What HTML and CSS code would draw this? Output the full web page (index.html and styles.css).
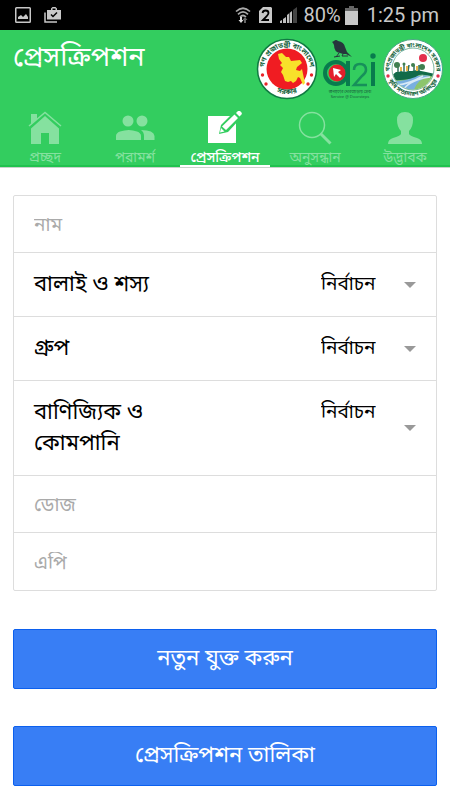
FILE: index.html
```html
<!DOCTYPE html>
<html lang="bn">
<head>
<meta charset="utf-8">
<meta name="viewport" content="width=device-width, initial-scale=1">
<title>প্রেসক্রিপশন</title>
<link rel="stylesheet" href="styles.css">
</head>
<body>
<div class="status">
  <div class="status-group status-left">
    <svg width="16" height="16" viewBox="0 0 16 16"><path fill="#c8c8c8" fill-rule="evenodd" d="M1.500 0h13A1.500 1.500 0 0 1 16 1.500v13a1.500 1.500 0 0 1-1.500 1.500h-13A1.500 1.500 0 0 1 0 14.500v-13A1.500 1.500 0 0 1 1.500 0zM1.500 1.500v13h13v-13z"/><path fill="#c8c8c8" d="M3 12V10l3-2 2 2 3-3 2 3v2z"/></svg>
    <svg width="17" height="16" viewBox="0 0 17 16"><path fill="none" stroke="#c8c8c8" stroke-width="1.500" d="M1 5.500V15h12"/><path fill="#c8c8c8" fill-rule="evenodd" d="M3 3h4V1.500L8.500 0h3L13 1.500V3h4v9.500H3zM8.500 3h3V1.500h-3z"/><path fill="none" stroke="#000" stroke-width="1.500" d="M7 7.500l2 2 4-4"/></svg>
  </div>
  <div class="status-group">
    <svg class="wifi" width="16" height="18" viewBox="0 0 16 18"><g fill="none" stroke="#aaa" stroke-width="1.700"><path d="M1 5.500Q8-1 15 5.500"/><path d="M3 8.300Q8 3.500 13 8.300"/><path d="M5 11Q8 8 11 11"/></g><path fill="#ddd" d="M5 11h2v3h1.500L6 17l-2.500-3H5z"/><path fill="#666" d="M9 17v-3H7.500L10 11l2.500 3H11v3z"/></svg>
    <svg class="sim" width="13" height="16" viewBox="0 0 13 16"><path fill="#c8c8c8" d="M4 0h8l1 1v15H0V4z"/><path fill="none" stroke="#000" stroke-width="1.800" d="M3.500 6Q4 3.500 6.500 3.500 9.500 3.500 9.500 6q0 1.700-5.500 7h6"/></svg>
    <svg class="signal" width="17" height="16" viewBox="0 0 17 16"><path fill="#c0c0c0" d="M0 14l2-1v3H0zM3 12l3-2v6H3zM7 8l5-4v12H7z"/><path fill="#000" d="M9.300 6h.6v10h-.6z"/><path fill="#444" d="M13 3l4-3v16h-4z"/></svg>
    <span class="status-text">80%</span>
    <svg class="battery" width="13" height="19" viewBox="0 0 13 19"><path fill="#666" d="M4 0h5v2h4v4H0V2h4z"/><path fill="#c8c8c8" d="M0 5h13v14H0z"/></svg>
    <span class="status-text">1:25 pm</span>
  </div>
</div>

<header class="header">
  <div class="title-row">
    <h1 class="title">প্রেসক্রিপশন</h1>
    <div class="logos">
      <svg width="62" height="62" viewBox="0 0 62 62" role="img" aria-label="গণপ্রজাতন্ত্রী বাংলাদেশ সরকার">
        <defs><path id="g-top" d="M11 43.500A23 23 0 1 1 51 43.500"/><path id="g-bot" d="M13 49A26.500 26.500 0 0 0 49 49"/></defs>
        <circle cx="31" cy="31" r="29.500" fill="#fff" stroke="#107a42" stroke-width="1.500"/>
        <circle cx="31" cy="31" r="20.500" fill="#f01c22"/>
        <path fill="#f8e02a" d="M22 16l4-1 4 4 3 0 2 4 9-1 2 3-5 4-1 3 4 1 2-2 1 5 2 9-2 2-3-7-2-1-2 4-3 2-2-2-3 1-3-1-2-6-2-3 2-4-3-3 2-2-3-4z"/>
        <g fill="#e8242a"><circle cx="6.500" cy="37" r="1.700"/><circle cx="10" cy="46" r="1.700"/><circle cx="55.500" cy="37" r="1.700"/><circle cx="52" cy="46" r="1.700"/></g>
        <g class="seal-text"><text><textPath href="#g-top" startOffset="50%">গণ প্রজাতন্ত্রী বাংলাদেশ</textPath></text><text><textPath href="#g-bot" startOffset="50%">সরকার</textPath></text></g>
      </svg>
      <svg width="56" height="64" viewBox="0 0 56 64" role="img" aria-label="a2i">
        <path fill="#26363c" d="M10 4l2-1q2-2 4 0 6 1 7 6l2 5 5 5-6-3-3 0-3-1q-6-1-6-8l-1-2z"/>
        <path fill="none" stroke="#26363c" stroke-width="1" d="M17 15l-3 4M21 16l-1 2 6 0M12 19l6-1"/>
        <circle cx="14" cy="35" r="11" fill="none" stroke="#087b4d" stroke-width="4"/>
        <circle cx="15" cy="35" r="8.500" fill="#e31f2b"/>
        <path fill="none" stroke="#087b4d" stroke-width="4" d="M26 23v25"/>
        <path fill="#fff" d="M11 30l8 2-3 2 4 4-2 2-4-4-2 3z"/>
        <path fill="none" stroke="#17905a" stroke-width="2.500" d="M32 32q0-6 6-6t6 6q0 3-4 6l-8 9h13"/>
        <path fill="none" stroke="#087b4d" stroke-width="4" d="M51 24v24"/>
        <circle cx="51" cy="18" r="2.700" fill="#087b4d"/>
        <text class="logo-caption" x="28" y="55">জনগণের দোরগোড়ায় সেবা</text>
        <text class="logo-caption" x="28" y="60">Service @ Doorsteps</text>
      </svg>
      <svg width="62" height="62" viewBox="0 0 62 62" role="img" aria-label="কৃষি সম্প্রসারণ অধিদপ্তর">
        <defs><path id="k-top" d="M9 41A23.500 23.500 0 1 1 53 41"/><path id="k-bot" d="M7.500 44A27 27 0 0 0 54.500 44"/><clipPath id="k-clip"><circle cx="31" cy="31" r="20.500"/></clipPath></defs>
        <circle cx="31" cy="31" r="29.500" fill="#fff" stroke="#4aa783" stroke-width="1"/>
        <circle cx="31" cy="31" r="21" fill="#fff" stroke="#7fb8a0" stroke-width="1"/>
        <g clip-path="url(#k-clip)">
          <circle cx="41" cy="20" r="4" fill="#e3304c"/>
          <path fill="#8cc56c" d="M10 40q12-4 26-3l18-1v22H22z"/>
          <path fill="#79afe0" d="M12 43q15 0 20-5l18-1q-16 4-19 18H16z"/>
          <path fill="none" stroke="#d8e9f7" stroke-width="1.500" d="M15 47q12-1 26-9M22 51q6-9 26-12"/>
          <path fill="#126a49" d="M9 38l5-4 3 0 2-1 3 1 5-1 3 0 5-1 4 1 5 1 9 2v3q-10-3-16-2-8 6-27 5z"/>
          <path fill="none" stroke="#326e58" stroke-width="1.500" d="M16 27v7M22 25v9M27 27l-1 7M32 27v6M37 27v6"/>
          <path fill="#e8b64c" d="M24 28h2v5h-2zM34 28h2v5h-2zM18 29h2v4h-2z"/>
          <g fill="#3f7f50"><circle cx="15" cy="27" r="3"/><circle cx="22" cy="26" r="1.500"/><circle cx="31" cy="27" r="2"/><circle cx="40" cy="29" r="3"/></g>
        </g>
        <g fill="#e3304c"><circle cx="6" cy="38" r="1.700"/><circle cx="56" cy="38" r="1.700"/></g>
        <g class="seal-text seal-small"><text><textPath href="#k-top" startOffset="50%">গণপ্রজাতন্ত্রী বাংলাদেশ সরকার</textPath></text><text><textPath href="#k-bot" startOffset="50%">কৃষি সম্প্রসারণ অধিদপ্তর</textPath></text></g>
      </svg>
    </div>
  </div>
  <nav class="tabs">
    <a class="tab" href="#home"><svg width="34" height="34" viewBox="0 0 34 34" fill="currentColor"><path d="M17 5L31 17.500V33H21V22h-8v11H3V17.500z"/><path d="M3 3h6v5l-6 5.500z"/><path fill="none" stroke="currentColor" stroke-width="1.500" d="M1 15L17 1.500 33 15"/></svg><span>প্রচ্ছদ</span></a>
    <a class="tab" href="#advice"><svg width="40" height="34" viewBox="0 0 40 34" fill="currentColor"><circle cx="13" cy="10" r="5.500"/><circle cx="27" cy="10" r="5.500"/><path d="M1 29v-4q0-3 4-4.500 9-3 17 0 4 1.500 4 4.500v4zM26 19q13 0 13.500 6v4H29v-4q0-4-3-6z"/></svg><span>পরামর্শ</span></a>
    <a class="tab tab-active" href="#prescription" aria-current="page"><svg width="34" height="34" viewBox="0 0 34 34"><path fill="currentColor" d="M0 5h24l4 6v21H0z"/><path fill="#33cd5f" d="M11 23l2-9L25 2l7 6-12 13z"/><path fill="currentColor" d="M26.500 3.500l3.500 3.500-12 12-4-3.500zM13 17l3.500 3.500-4.500 1zM28 2l2-2q1-.7 2 0l1.500 1.500q.7 1 0 2l-2 2z"/></svg><span>প্রেসক্রিপশন</span></a>
    <a class="tab" href="#search"><svg width="34" height="34" viewBox="0 0 34 34" fill="none" stroke="currentColor"><circle cx="14" cy="14" r="12.500" stroke-width="1.500"/><path stroke-width="3" d="M22.500 22.500L32.500 32.500"/></svg><span>অনুসন্ধান</span></a>
    <a class="tab" href="#innovator"><svg width="34" height="34" viewBox="0 0 34 34" fill="currentColor"><path d="M17 1q8 0 8 8 0 7-4 11v3q1 2 8 4 5 1.500 5 6H0q0-4.500 5-6 7-2 8-4v-3Q9 16 9 9q0-8 8-8z"/></svg><span>উদ্ভাবক</span></a>
  </nav>
</header>

<main class="content">
  <form>
    <div class="list">
      <input class="field" type="text" placeholder="নাম" aria-label="নাম">
      <div class="row"><label for="pest">বালাই ও শস্য</label><select id="pest"><option>নির্বাচন</option></select></div>
      <div class="row"><label for="group">গ্রুপ</label><select id="group"><option>নির্বাচন</option></select></div>
      <div class="row"><label for="company">বাণিজ্যিক ও কোমপানি</label><select id="company"><option>নির্বাচন</option></select></div>
      <input class="field" type="text" placeholder="ডোজ" aria-label="ডোজ">
      <input class="field" type="text" placeholder="এপি" aria-label="এপি">
    </div>
    <button class="button" type="button">নতুন যুক্ত করুন</button>
    <button class="button" type="button">প্রেসক্রিপশন তালিকা</button>
  </form>
</main>
</body>
</html>
```

FILE: styles.css
```css
* {
  box-sizing: border-box;
}

body {
  margin: 0;
  background: #fff;
  color: #000;
  font-family: "Noto Sans Bengali", "Noto Sans", sans-serif;
}

.status {
  display: flex;
  justify-content: space-between;
  height: 30px;
  padding: 0 11px 0 15px;
  background: #000;
}

.status-group {
  display: flex;
  align-items: center;
}

.status-left {
  gap: 13px;
}

.wifi {
  margin-right: 8px;
}

.sim {
  margin-right: 8px;
}

.signal {
  margin-right: 7px;
}

.battery {
  margin: 0 9px 0 4px;
}

.status-text {
  color: #c8c8c8;
  font: 20px/32px Roboto, sans-serif;
}

.header {
  background: #33cd5f;
  color: #fff;
  border-bottom: 1px solid #c9d3cb;
}

.title-row {
  display: flex;
  justify-content: space-between;
  height: 78px;
  padding: 8px 6px 0 13px;
}

.title {
  margin: 0;
  font-size: 27px;
  font-weight: 400;
  line-height: 42px;
}

.logos {
  display: flex;
  gap: 4px;
}

.logos svg {
  overflow: visible;
}

.seal-text {
  fill: #14643c;
  font-size: 7px;
  font-weight: 700;
  text-anchor: middle;
}

.seal-small {
  font-size: 6px;
}

.logo-caption {
  fill: #17563a;
  font-size: 4px;
  text-anchor: middle;
}

.tabs {
  display: grid;
  grid-template-columns: repeat(5, 1fr);
}

.tab {
  display: flex;
  flex-direction: column;
  align-items: center;
  height: 59px;
  padding-top: 3px;
  border-bottom: 2px solid #20c24e;
  color: #85e19f;
  font-size: 14px;
  line-height: 28px;
  text-decoration: none;
  white-space: nowrap;
}

.tab svg {
  flex: none;
}

.tab-active {
  border-color: #fff;
  color: #fff;
  font-weight: 500;
}

.content {
  padding: 27px 13px 14px;
}

.list {
  margin-bottom: 38px;
  border: 1px solid #ddd;
  border-radius: 2px;
}

.field,
.row {
  border: 0;
  border-bottom: 1px solid #ddd;
}

.list > :last-child {
  border-bottom: 0;
}

.field {
  display: block;
  width: 100%;
  height: 57px;
  padding: 5px 20px 0;
  background: none;
  font: inherit;
  font-size: 19px;
}

.field::placeholder {
  color: #aaa;
  opacity: 1;
}

.row {
  position: relative;
  display: flex;
  justify-content: space-between;
  align-items: flex-start;
  padding: 17px 60px 15px 20px;
  font-size: 22px;
  line-height: 31px;
}

.row::after {
  content: "";
  position: absolute;
  top: 50%;
  right: 20px;
  margin-top: -3px;
  border: 6px solid transparent;
  border-top-color: #999;
  border-bottom: 0;
}

.row label {
  max-width: 150px;
}

.row select {
  height: 31px;
  padding: 0;
  border: 0;
  appearance: none;
  background: none;
  color: #000;
  font: inherit;
  font-size: 19px;
}

.button {
  display: block;
  width: 100%;
  height: 60px;
  margin-bottom: 37px;
  padding: 0;
  border: 1px solid #0c60ee;
  border-radius: 2px;
  background: #387ef5;
  color: #fff;
  font: inherit;
  font-size: 22px;
}

.button:last-child {
  margin-bottom: 0;
}
```
